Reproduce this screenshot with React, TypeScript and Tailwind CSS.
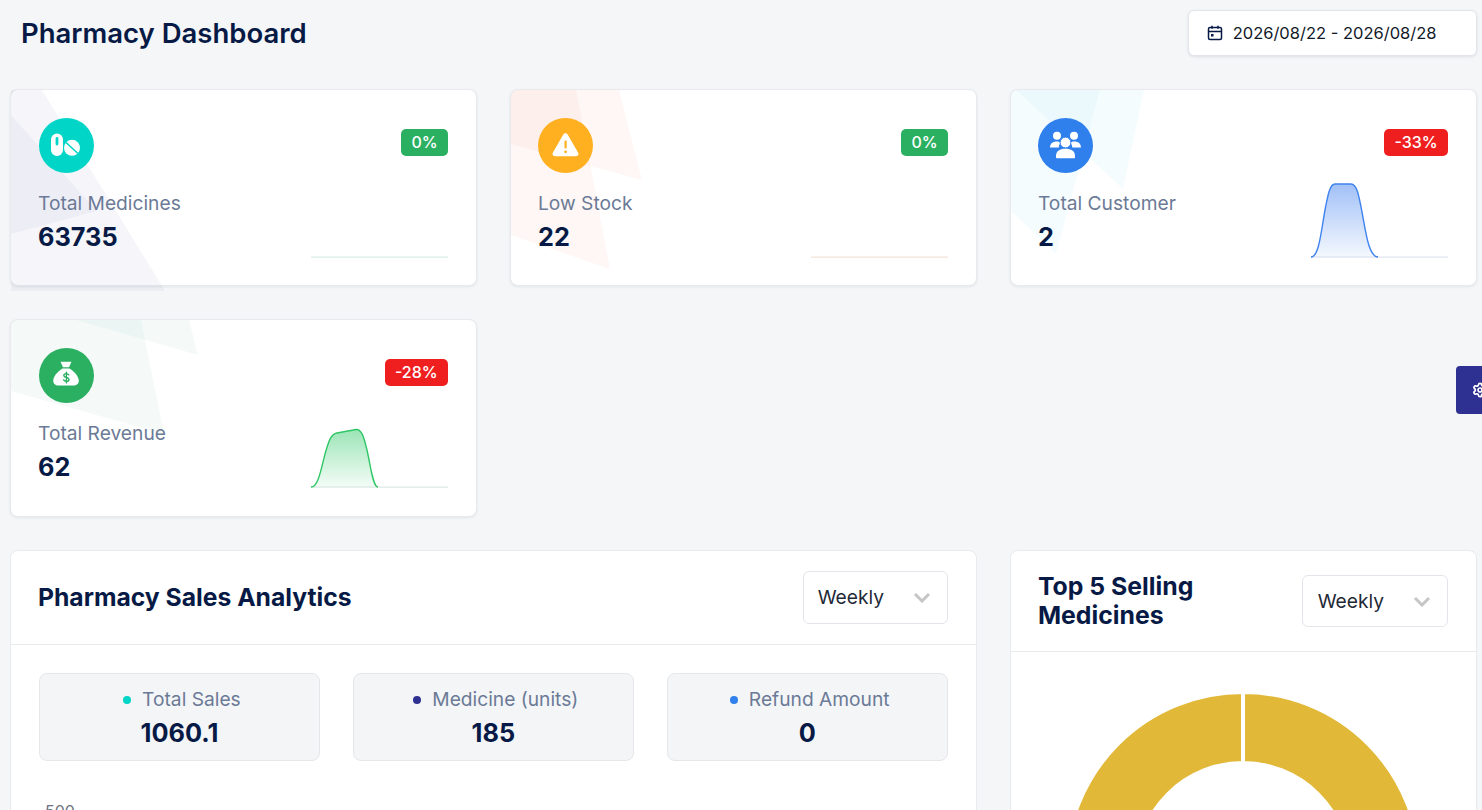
import React from "react";
import { Settings } from "lucide-react";

const navy = "text-[#071a45]";

function IconCircle({ className, children }: { className: string; children: React.ReactNode }) {
  return (
    <div className={`h-[55px] w-[55px] rounded-full ${className}`}>
      <svg viewBox="0 0 55 55" className="h-[55px] w-[55px]">
        {children}
      </svg>
    </div>
  );
}

const PillsIcon = (
  <g fill="#fff">
    <path d="M18 15.500a6 6 0 0 1 6 6V32a6 6 0 0 1-12 0V21.500a6 6 0 0 1 6-6Z" />
    <rect x="16.600" y="19" width="2.800" height="8.500" rx="1.400" fill="#00d5c7" />
    <circle cx="33" cy="29.800" r="8" />
    <path d="M27 24.500 39 35.500" stroke="#00d5c7" strokeWidth="1.600" />
  </g>
);

const WarnIcon = (
  <g>
    <path d="M25.200 16.700a2.600 2.600 0 0 1 4.600 0l10.400 18a2.300 2.300 0 0 1-2 3.500H16.800a2.300 2.300 0 0 1-2-3.500Z" fill="#fff" />
    <rect x="26.500" y="22.500" width="2.200" height="8" rx="1" fill="#ffb020" />
    <circle cx="27.600" cy="33.800" r="1.400" fill="#ffb020" />
  </g>
);

const UsersIcon = (
  <g fill="#fff">
    <circle cx="19" cy="17.800" r="4" />
    <circle cx="36" cy="17.800" r="4" />
    <path d="M12 29.500c0-4 3-6 6.500-6 1.700 0 3.200.4 4.200 1.300a7 7 0 0 0-2 4.700Z" />
    <path d="M43 29.500c0-4-3-6-6.500-6-1.700 0-3.200.4-4.200 1.300a7 7 0 0 1 2 4.700Z" />
    <circle cx="27.500" cy="24.500" r="5.400" stroke="#2f80ed" strokeWidth="1" />
    <path d="M18 39.500v-1.700c0-4.500 4-7 9.500-7s9.500 2.500 9.500 7v1.700a.8.8 0 0 1-.8.8H18.800a.8.8 0 0 1-.8-.8Z" />
  </g>
);

const BagIcon = (
  <g>
    <path d="M21.500 13.800h11l-2.500 5.500h-6Z" fill="#fff" />
    <path d="M23.500 20.500h7c5.200 3 9.300 8.500 9.300 12.300 0 3.200-2.300 4.700-5.300 4.700H19.500c-3 0-5.300-1.500-5.300-4.700 0-3.800 4.100-9.300 9.300-12.300Z" fill="#fff" />
    <path d="M29.800 26.800c-.5-.8-1.400-1.200-2.500-1.200-1.500 0-2.500.7-2.500 1.900 0 2.700 5.200 1.300 5.200 3.900 0 1.200-1.100 1.900-2.700 1.900-1.200 0-2.200-.5-2.700-1.400M27.400 24.200v10.700" fill="none" stroke="#2bb062" strokeWidth="1.400" strokeLinecap="round" />
  </g>
);

function Badge({ text, red }: { text: string; red?: boolean }) {
  return (
    <div className={`mt-[11px] flex h-[27px] items-center rounded-[5px] px-[10px] pb-px text-[16px] font-medium leading-none text-white ${red ? "bg-[#f01f1f]" : "bg-[#2bb062]"}`}>
      {text}
    </div>
  );
}

function Spark({ base, stroke, fill, id, d, area }: { base: string; stroke?: string; fill?: string; id: string; d?: string; area?: string }) {
  return (
    <svg viewBox="0 0 137 78" className="h-[78px] w-[137px] shrink-0">
      {fill && (
        <defs>
          <linearGradient id={id} x1="0" y1="0" x2="0" y2="1">
            <stop offset="0" stopColor={fill} stopOpacity="0.45" />
            <stop offset="1" stopColor={fill} stopOpacity="0.05" />
          </linearGradient>
        </defs>
      )}
      <path d="M0 77.200H137" stroke={base} strokeWidth="1.300" fill="none" />
      {area && <path d={area} fill={`url(#${id})`} />}
      {d && <path d={d} stroke={stroke} strokeWidth="1.400" fill="none" />}
    </svg>
  );
}

function Shapes({ a, b, color }: { a: string; b: string; color: string }) {
  return (
    <svg className="pointer-events-none absolute left-0 top-0 overflow-visible" width="200" height="200">
      <polygon points={a} fill={color} fillOpacity="0.045" />
      <polygon points={b} fill={color} fillOpacity="0.045" />
    </svg>
  );
}

function StatCard({
  icon, circle, label, value, badge, red, spark, shapes, clip = true, tall = false,
}: {
  icon: React.ReactNode; circle: string; label: string; value: string; badge: string; red?: boolean; spark: React.ReactNode; shapes: React.ReactNode; clip?: boolean; tall?: boolean;
}) {
  return (
    <div className={`relative rounded-lg border border-[#e8eaee] bg-white p-7 shadow-[0_1px_3px_rgba(16,24,40,0.08)] ${tall ? "h-[198px]" : "h-[197px]"} ${clip ? "overflow-hidden" : ""}`}>
      {shapes}
      <div className="relative flex items-start justify-between">
        <IconCircle className={circle}>{icon}</IconCircle>
        <Badge text={badge} red={red} />
      </div>
      <div className="relative mt-[7px] flex items-start justify-between">
        <div className="-ml-px pt-[10px]">
          <div className="text-[19.200px] leading-[27px] text-[#6b7a96]">{label}</div>
          <div className={`mt-[2px] text-[25.300px] font-bold leading-[36px] ${navy}`}>{value}</div>
        </div>
        {spark}
      </div>
    </div>
  );
}

function Select({ className }: { className: string }) {
  return (
    <div className={`flex shrink-0 items-center justify-between rounded-md border border-[#e2e5ea] bg-white pr-[16px] text-[19.200px] text-[#1f2937] ${className}`}>
      <span>Weekly</span>
      <svg width="18" height="11" viewBox="0 0 18 11" fill="none">
        <path d="M2 2 9 9 16 2" stroke="#c6c6c6" strokeWidth="3" />
      </svg>
    </div>
  );
}

function Stat({ dot, label, value }: { dot: string; label: string; value: string }) {
  return (
    <div className="flex h-[88px] flex-col items-center rounded-lg border border-[#e5e7eb] bg-[#f4f5f7] pt-[12px]">
      <div className="flex items-center gap-[11px] pl-[5px] text-[19.200px] leading-[27px] text-[#6b7a96]">
        <span className={`h-2 w-2 rounded-full ${dot}`} />
        {label}
      </div>
      <div className={`mt-[1px] text-[25.300px] font-bold leading-[38px] ${navy}`}>{value}</div>
    </div>
  );
}

export default function App() {
  return (
    <div className="relative h-[810px] w-[1482px] overflow-hidden bg-[#f5f6f8] pl-[10px] pt-[10px] font-['Inter',sans-serif]">
      <div className="w-[1466.670px]">
        <div className="mb-[34px] flex h-[45px] items-start justify-between">
          <h1 className={`ml-[11px] mt-[3px] text-[27.500px] font-semibold leading-[40px] ${navy}`}>Pharmacy Dashboard</h1>
          <div className="flex h-[46px] w-[289px] items-center gap-[10px] rounded-md border border-[#e2e5ea] bg-white pl-[18px] text-[16.500px] text-[#111827] shadow-[0_1px_3px_rgba(16,24,40,0.1)]">
            <svg width="16" height="16" viewBox="0 0 16 16" fill="none" stroke="#071a45" strokeWidth="1.500">
              <rect x="1.500" y="2.500" width="13" height="12" rx="1.500" />
              <path d="M1.500 6.500h13M5 .8v3M11 .8v3" />
              <rect x="4" y="9" width="2.500" height="2.500" fill="#071a45" stroke="none" />
            </svg>
            2026/08/22 - 2026/08/28
          </div>
        </div>

        <div className="grid grid-cols-3 gap-x-[33.330px] gap-y-[33px]">
          <StatCard
            clip={false}
            icon={PillsIcon}
            circle="bg-[#00d5c7]"
            label="Total Medicines"
            value="63735"
            badge="0%"
            spark={<Spark base="#d6ece9" id="g1" />}
            shapes={<Shapes color="#2e3192" a="0,0 31,0 154,201 0,201" b="0,25 86,121 0,144" />}
          />
          <StatCard
            icon={WarnIcon}
            circle="-ml-px bg-[#ffb020]"
            label="Low Stock"
            value="22"
            badge="0%"
            spark={<Spark base="#f2e2d9" id="g2" />}
            shapes={<Shapes color="#e8401c" a="0,0 65,0 99,179 0,145" b="0,0 108,0 131,90 0,54" />}
          />
          <StatCard
            icon={UsersIcon}
            circle="-ml-px bg-[#2f80ed]"
            label="Total Customer"
            value="2"
            badge="-33%"
            red
            spark={
              <Spark
                base="#dfe5f0"
                id="g3"
                stroke="#3f83f0"
                fill="#2f74ed"
                d="M0 77C8 77 10 52 14 30 17 14 19 4 24 4H40C46 4 48 16 51 32 55 54 58 77 67 77"
                area="M0 77C8 77 10 52 14 30 17 14 19 4 24 4H40C46 4 48 16 51 32 55 54 58 77 67 77Z"
              />
            }
            shapes={<Shapes color="#0db4e8" a="0,0 89,0 45,164 0,121" b="5,0 133,0 112,99" />}
          />
          <StatCard
            tall
            icon={BagIcon}
            circle="bg-[#2bb062]"
            label="Total Revenue"
            value="62"
            badge="-28%"
            red
            spark={
              <Spark
                base="#dbe8e4"
                id="g4"
                stroke="#2fc766"
                fill="#22c55e"
                d="M0 77C7 77 10 60 14 44 18 30 20 24 26 23L45 19.500C51 19 53 28 56 40 60 58 62 77 67 77"
                area="M0 77C7 77 10 60 14 44 18 30 20 24 26 23L45 19.500C51 19 53 28 56 40 60 58 62 77 67 77Z"
              />
            }
            shapes={<Shapes color="#1f8f70" a="0,0 130,0 153,114 0,71" b="65,0 178,0 187,35" />}
          />

          <div className="col-span-2 col-start-1 rounded-lg border border-[#e8eaee] bg-white">
            <div className="flex items-center justify-between border-b border-[#e8eaee] py-5 pl-[27px] pr-7">
              <h2 className={`mb-[2px] text-[24.700px] font-bold leading-8 ${navy}`}>Pharmacy Sales Analytics</h2>
              <Select className="h-[53px] w-[145px] pl-[14px]" />
            </div>
            <div className="px-7 pt-7">
              <div className="grid grid-cols-3 gap-[33px]">
                <Stat dot="bg-[#00d5c7]" label="Total Sales" value="1060.1" />
                <Stat dot="bg-[#2e3192]" label="Medicine (units)" value="185" />
                <Stat dot="bg-[#2f80ed]" label="Refund Amount" value="0" />
              </div>
              <div className="ml-[6px] mt-[40px] text-[16px] leading-5 text-[#6b7280]">500</div>
            </div>
          </div>

          <div className="rounded-lg border border-[#e8eaee] bg-white">
            <div className="flex items-center justify-between gap-4 border-b border-[#e8eaee] py-[20.500px] pl-[27px] pr-7">
              <h2 className={`mb-[1px] text-[24.800px] font-bold leading-[29px] ${navy}`}>Top 5 Selling Medicines</h2>
              <Select className="h-[52px] w-[146px] pl-[15px]" />
            </div>
            <div className="flex justify-center pt-[42px]">
              <svg width="350" height="350" viewBox="-175 -175 350 350" className="overflow-visible">
                <g fill="#e2b838" stroke="#fff" strokeWidth="4">
                  <path d="M0 -177A177 177 0 0 1 0 177L0 106A106 106 0 0 0 0 -106Z" />
                  <path d="M0 -177A177 177 0 0 0 0 177L0 106A106 106 0 0 1 0 -106Z" />
                </g>
              </svg>
            </div>
          </div>
        </div>
      </div>

      <div className="absolute right-0 top-[366px] flex h-[48px] w-[26px] items-center overflow-hidden rounded-l-[4px] bg-[#2e3192] pl-4 text-white">
        <Settings size={16} className="shrink-0" strokeWidth={2.600} />
      </div>
    </div>
  );
}
